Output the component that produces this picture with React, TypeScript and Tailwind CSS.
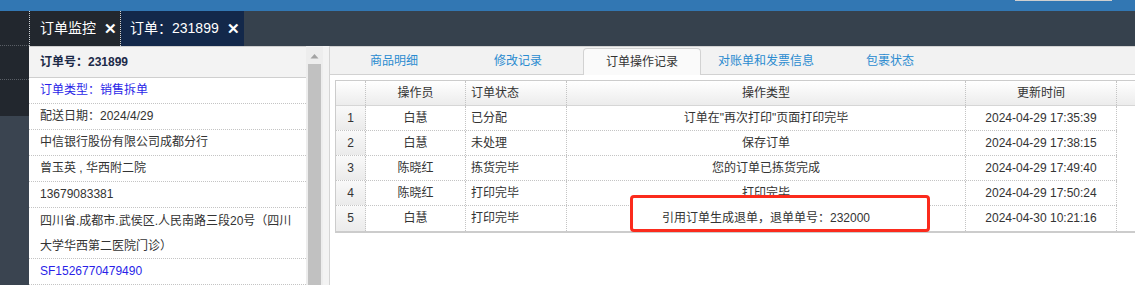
import React from "react";

const font = "font-['Liberation_Sans','Noto_Sans_CJK_SC',sans-serif]";

const logs = [
  ["1", "白慧", "已分配", "订单在\"再次打印\"页面打印完毕", "2024-04-29 17:35:39"],
  ["2", "白慧", "未处理", "保存订单", "2024-04-29 17:38:15"],
  ["3", "陈晓红", "拣货完毕", "您的订单已拣货完成", "2024-04-29 17:49:40"],
  ["4", "陈晓红", "打印完毕", "打印完毕", "2024-04-29 17:50:24"],
  ["5", "白慧", "打印完毕", "引用订单生成退单，退单单号：232000", "2024-04-30 10:21:16"],
];

const tabs = ["商品明细", "修改记录", "订单操作记录", "对账单和发票信息", "包裹状态"];

function InfoRow({ children, blue, tall }: { children: React.ReactNode; blue?: boolean; tall?: boolean }) {
  return (
    <div
      className={`shrink-0 whitespace-nowrap border-b border-dotted border-[#c4c4c4] pl-[11px] pr-[12px] text-[12px] ${
        tall ? "h-[51px] leading-[25px] pt-[1px]" : "h-[26px] leading-[25px]"
      } ${blue ? "text-[#2a1fe8]" : "text-[#333]"}`}
    >
      {children}
    </div>
  );
}

function OrderInfo() {
  return (
    <div className="flex w-[277px] shrink-0 flex-col bg-white">
      <div className="h-[32px] shrink-0 border-y border-[#cfcfcf] bg-[#f3f3f3] pl-[11px] text-[12px] font-bold leading-[30px] text-[#1c2a48]">
        订单号：231899
      </div>
      <InfoRow blue>订单类型：销售拆单</InfoRow>
      <InfoRow>配送日期：2024/4/29</InfoRow>
      <InfoRow>中信银行股份有限公司成都分行</InfoRow>
      <InfoRow>曾玉英 , 华西附二院</InfoRow>
      <InfoRow>13679083381</InfoRow>
      <InfoRow tall>
        四川省.成都市.武侯区.人民南路三段20号（四川
        <br />
        大学华西第二医院门诊）
      </InfoRow>
      <InfoRow blue>SF1526770479490</InfoRow>
    </div>
  );
}

function Scrollbar() {
  return (
    <div className="flex w-[17px] shrink-0 flex-col bg-[#ededed] pt-[1px]">
      <div className="flex h-[17px] items-center justify-center">
        <svg width="9" height="6" viewBox="0 0 9 6">
          <path d="M0.5 5.5 L4.5 1 L8.5 5.5 Z" fill="#a3a3a3" />
        </svg>
      </div>
      <div className="mx-[2px] flex-1 bg-[#c1c1c1]" />
    </div>
  );
}

function LogTable() {
  const cols = ["w-[30px]", "w-[100px]", "w-[101px]", "w-[399px]", "w-[151px]"];
  const cell = "shrink-0 border-r border-dotted border-[#c4c4c4]";
  return (
    <div className="relative ml-[5px] mt-[5px] w-[900px] border-l border-t border-b-2 border-[#cccccc]">
      <div className="flex h-[25px] border-b border-[#d6d6d6] bg-gradient-to-b from-white to-[#ececec] text-[12px] leading-[24px] text-[#333]">
        <div className={`${cols[0]} ${cell}`} />
        <div className={`${cols[1]} ${cell} text-center`}>操作员</div>
        <div className={`${cols[2]} ${cell} pl-[5px]`}>订单状态</div>
        <div className={`${cols[3]} ${cell} text-center`}>操作类型</div>
        <div className={`${cols[4]} ${cell} text-center`}>更新时间</div>
      </div>
      {logs.map((r, i) => (
        <div key={r[0]} className="flex h-[25px] text-[12px] leading-[24px] text-[#333]">
          <div className={`flex ${i < logs.length - 1 ? "border-b border-dotted border-[#c4c4c4]" : ""}`}>
            <div className={`${cols[0]} ${cell} bg-gradient-to-b from-[#f9f9f9] to-[#ebebeb] text-center`}>
              {r[0]}
            </div>
            <div className={`${cols[1]} ${cell} text-center`}>{r[1]}</div>
            <div className={`${cols[2]} ${cell} pl-[5px]`}>{r[2]}</div>
            <div className={`${cols[3]} ${cell} text-center`}>
              {i === logs.length - 1 ? <span className="relative z-20">{r[3]}</span> : r[3]}
            </div>
            <div className={`${cols[4]} ${cell} text-center`}>{r[4]}</div>
          </div>
        </div>
      ))}
      {/* annotation box */}
      <div className="absolute left-[294px] top-[114px] z-10 h-[37px] w-[300px] rounded-[4px] border-[3px] border-[#fb2b1d] bg-white" />
    </div>
  );
}

function OrderLog() {
  return (
    <div className="flex min-w-0 flex-1 flex-col border-l border-[#d4d4d4] bg-white">
      <div className="flex h-[29px] shrink-0 border-y border-[#d2d2d2] bg-[#f2f2f2] pl-[2px]">
        {tabs.map((t, i) =>
          i === 2 ? (
            <div
              key={t}
              className="relative mx-[3px] -mb-px mt-[1px] flex w-[118px] shrink-0 items-center justify-center rounded-t-[4px] border border-b-0 border-[#d2d2d2] bg-[#fafafa] text-[12px] text-[#333]"
            >
              {t}
            </div>
          ) : (
            <div key={t} className="flex w-[124px] shrink-0 items-center justify-center text-[12px] text-[#2a8bd0]">
              {t}
            </div>
          )
        )}
      </div>
      <div className="overflow-hidden">
        <LogTable />
      </div>
    </div>
  );
}

export default function App() {
  return (
    <div className={`${font} flex h-[285px] w-[1135px] flex-col overflow-hidden bg-white`}>
      <div className="flex h-[11px] shrink-0 justify-end bg-[#3277b3]">
        <div className="mr-[23px] h-px w-[97px] bg-[#cfcfcf]" />
      </div>
      <div className="flex h-[35px] shrink-0 bg-[#36414d]">
        <div className="w-[29px] shrink-0 border-b border-dotted border-[#5a5f66] bg-[#22272e]" />
        <div className="flex w-[92px] shrink-0 items-center gap-[8px] border-x border-dotted border-[#cfd3d8] bg-[#22272e] pl-[10px] text-[14px] text-white">
          订单监控
          <span className="text-[15px] font-bold leading-none">✕</span>
        </div>
        <div className="flex w-[123px] shrink-0 items-center gap-[8px] bg-[#13284a] pl-[9px] text-[14px] text-white">
          订单：231899
          <span className="text-[15px] font-bold leading-none">✕</span>
        </div>
      </div>
      <div className="flex min-h-0 flex-1">
        <div className="flex w-[29px] shrink-0 flex-col">
          <div className="h-[70px] bg-[#22272e] pt-[33px]">
            <div className="border-b border-dotted border-[#5a5f66]" />
          </div>
          <div className="flex-1 bg-[#3a4450]" />
        </div>
        <OrderInfo />
        <Scrollbar />
        <div className="w-[6px] shrink-0 bg-[#f3f3f3]" />
        <OrderLog />
      </div>
    </div>
  );
}
